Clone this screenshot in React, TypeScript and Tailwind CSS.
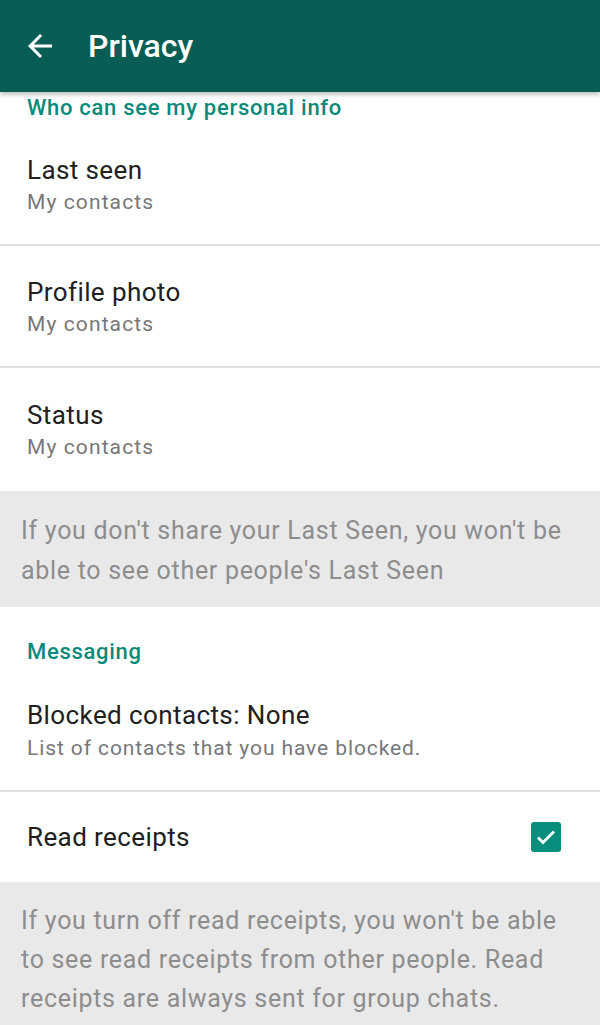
import {ReactNode} from "react";

function SectionTitle({children, className}: {children: ReactNode, className: string}) {
    return (
        <div className={"px-[27px] text-[#078a7a] font-medium text-[22px] tracking-[0.7px] leading-[28px] " + className}>
            {children}
        </div>
    )
}

function Item({title, subtitle, className}: {title: string, subtitle: string, className: string}) {
    return (
        <div className={"px-[27px] border-b-2 border-[#e0e0e0] " + className}>
            <div className="text-[26px] tracking-[0.4px] leading-[32px] text-[#202020]">{title}</div>
            <div className="text-[21px] tracking-[1.1px] leading-[28px] text-[#777777] mt-[2px]">{subtitle}</div>
        </div>
    )
}

function Note({children, className}: {children: ReactNode, className: string}) {
    return (
        <div className={"bg-[#e9e9e9] px-[21px] text-[25px] tracking-[0.7px] text-[#8d8d8d] whitespace-nowrap " + className}>
            {children}
        </div>
    )
}

export default function App() {
    return (
        <div className="w-[600px] h-[1025px] overflow-hidden bg-white font-['Roboto',sans-serif]">
            <div className="relative z-10 h-[92px] bg-[#085e55] flex items-center shadow-[0_2px_5px_rgba(0,0,0,0.3)]">
                <svg className="ml-[22px]" width="36" height="36" viewBox="0 0 24 24" fill="white">
                    <path d="M20 11H7.83l5.59-5.59L12 4l-8 8 8 8 1.41-1.41L7.83 13H20v-2z" />
                </svg>
                <span className="ml-[30px] text-white text-[32px] font-medium">Privacy</span>
            </div>

            <SectionTitle className="pt-[2px] h-[32px]">Who can see my personal info</SectionTitle>
            <Item title="Last seen" subtitle="My contacts" className="h-[122px] pt-[30px]" />
            <Item title="Profile photo" subtitle="My contacts" className="h-[122px] pt-[30px]" />
            <div className="px-[27px] h-[123px] pt-[31px]">
                <div className="text-[26px] tracking-[0.4px] leading-[32px] text-[#202020]">Status</div>
                <div className="text-[21px] tracking-[1.1px] leading-[28px] text-[#777777] mt-[2px]">My contacts</div>
            </div>

            <Note className="h-[116px] pt-[20px] leading-[40px]">
                If you don't share your Last Seen, you won't be<br />
                able to see other people's Last Seen
            </Note>

            <SectionTitle className="pt-[31px] h-[68px]">Messaging</SectionTitle>
            <div className="px-[27px] border-b-2 border-[#e0e0e0] h-[117px] pt-[24px]">
                <div className="text-[26px] tracking-[0.4px] leading-[32px] text-[#202020]">Blocked contacts: None</div>
                <div className="text-[21px] tracking-[0.9px] leading-[26px] text-[#777777] mt-[4px]">List of contacts that you have blocked.</div>
            </div>

            <div className="h-[90px] px-[27px] flex items-center justify-between">
                <span className="text-[26px] tracking-[0.4px] text-[#202020]">Read receipts</span>
                <div className="mr-[12px] w-[30px] h-[30px] rounded-[3px] bg-[#078e7c] flex items-center justify-center">
                    <svg width="24" height="24" viewBox="0 0 24 24" fill="none" stroke="white" strokeWidth="2.8">
                        <path d="M4 12.5l5 5L20 6.5" />
                    </svg>
                </div>
            </div>

            <Note className="h-[143px] pt-[19px] leading-[39px]">
                If you turn off read receipts, you won't be able<br />
                to see read receipts from other people. Read<br />
                receipts are always sent for group chats.
            </Note>
        </div>
    )
}
